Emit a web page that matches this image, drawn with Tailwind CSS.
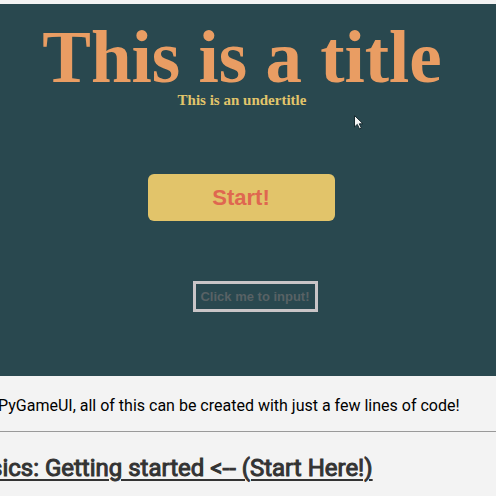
<!DOCTYPE html>
<html lang="en">
<head>
<meta charset="utf-8">
<meta name="viewport" content="width=device-width, initial-scale=1">
<title>PyGameUI</title>
<script src="https://cdn.jsdelivr.net/npm/@tailwindcss/browser@4"></script>
</head>
<body class="min-h-screen overflow-hidden bg-[#f3f3f3] pt-1 font-['Roboto',sans-serif]">
<section class="relative flex flex-col items-center bg-[#29484f] pt-5 pb-16">
  <div class="flex flex-col items-center pr-3 whitespace-nowrap font-['Liberation_Serif',serif] font-bold">
    <h1 class="text-[73px] leading-[68px] text-[#e99d63]">This is a title</h1>
    <p class="text-[15px] leading-4 text-[#e1c56b]">This is an undertitle</p>
  </div>
  <button type="button" class="mt-[66px] mr-[14px] h-[47px] w-[187px] rounded-md bg-[#e2c46a] font-['Liberation_Sans',sans-serif] text-[22px] font-bold text-[#df6750]">Start!</button>
  <input type="text" aria-label="Click me to input!" placeholder="Click me to input!" class="mt-[60px] ml-[14px] h-[31px] w-[125px] border-3 border-[#c9c5c7] bg-transparent text-center font-['Liberation_Sans',sans-serif] text-[13px] font-bold text-[#586265] placeholder:text-[#586265]">
  <svg class="absolute top-[110px] left-[353px] h-[17px] w-3" viewBox="0 0 12 17" aria-hidden="true"><path d="M1.5 1.5V13L4.3 10.4L6.5 15L8.4 14.1L6.3 9.8H10Z" fill="#f5f5f5" stroke="#172b30" stroke-width="1"/></svg>
</section>
<main class="whitespace-nowrap">
  <p class="-ml-0.5 pt-[18px] text-[16px] leading-6 text-black">PyGameUI, all of this can be created with just a few lines of code!</p>
  <hr class="mt-[13px] border-[#999]">
  <h2 class="mt-5 -ml-2.5 text-[24px] leading-8 font-normal text-[#333] [-webkit-text-stroke:1px_#333]"><a href="#start" class="underline decoration-2 underline-offset-3">sics: Getting started &lt;-- (Start Here!)</a></h2>
</main>
</body>
</html>
